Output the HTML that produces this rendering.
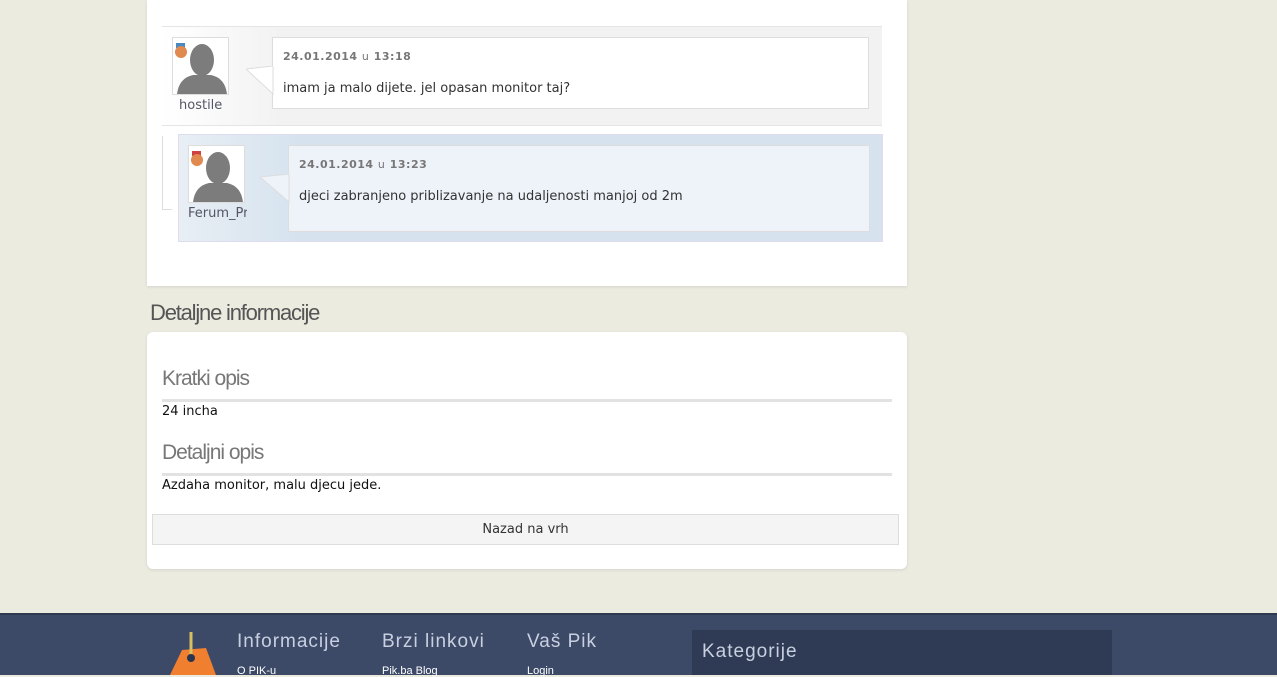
<!DOCTYPE html><html><head><meta charset="utf-8"><style>
*{margin:0;padding:0;box-sizing:border-box}
body{width:1277px;height:675px;overflow:hidden;background:#ebebe0;font-family:"DejaVu Sans",sans-serif;font-size:13px;color:#333;position:relative}
.abs{position:absolute}
.card{background:#fff;box-shadow:0 1px 3px rgba(0,0,0,.1)}
.av{position:absolute;width:57px;height:58px;background:#fff;border:1px solid #ddd;overflow:hidden}
.bub{position:absolute;border:1px solid #ddd}
.date{font-size:11px;font-weight:bold;color:#777;letter-spacing:.5px}
.date span{font-weight:normal}
h3{font-family:"Liberation Sans",sans-serif;font-weight:normal;font-size:21px;color:#777;letter-spacing:-1px}
.rule{height:3px;background:#e2e2e2}
.fh{position:absolute;font-family:'Liberation Sans',sans-serif;font-size:19px;color:#c8d0e0;letter-spacing:1px}
.fl{position:absolute;font-family:'Liberation Sans',sans-serif;font-size:11px;color:#fff;top:665px}
</style></head><body>
<div class="abs card" style="left:147px;top:0;width:760px;height:286px"></div>
<div class="abs" style="left:162px;top:26px;width:720px;height:100px;background:linear-gradient(90deg,#fff 0,#f2f2f2 120px);border-top:1px solid #e5e5e5;border-bottom:1px solid #e5e5e5"></div>
<div class="av" style="left:172px;top:37px"><svg width="57" height="58"><ellipse cx="29" cy="22" rx="12" ry="16" fill="#7c7c7c"/><path d="M4 56 Q6 40 20 37 L38 37 Q52 40 54 56Z" fill="#7c7c7c"/><rect x="3" y="5" width="9" height="5" fill="#4a88c0"/><circle cx="8" cy="14" r="6" fill="#e08a50"/></svg></div>
<div class="abs" style="left:179px;top:98px;color:#556">hostile</div>
<div class="bub" style="left:272px;top:37px;width:597px;height:72px;background:#fff"></div>
<svg class="abs" style="left:246px;top:66px" width="28" height="30"><path d="M27 0 L0 3 L27 28Z" fill="#fff" stroke="#ddd"/></svg>
<div class="abs date" style="left:283px;top:50px">24.01.2014 <span>u</span> 13:18</div>
<div class="abs" style="left:283px;top:81px">imam ja malo dijete. jel opasan monitor taj?</div>
<div class="abs" style="left:162px;top:136px;width:10px;height:74px;border-left:1px solid #ddd;border-bottom:1px solid #ddd"></div>
<div class="abs" style="left:178px;top:134px;width:705px;height:108px;background:linear-gradient(90deg,#e8eef4 0,#d6e3ef 120px);border:1px solid #dde"></div>
<div class="av" style="left:188px;top:145px"><svg width="57" height="58"><ellipse cx="29" cy="22" rx="12" ry="16" fill="#7c7c7c"/><path d="M4 56 Q6 40 20 37 L38 37 Q52 40 54 56Z" fill="#7c7c7c"/><rect x="3" y="5" width="9" height="5" fill="#d04040"/><circle cx="8" cy="14" r="6" fill="#e08a50"/></svg></div>
<div class="abs" style="left:188px;top:206px;color:#556;width:59px;overflow:hidden;white-space:nowrap">Ferum_Pr</div>
<div class="bub" style="left:288px;top:145px;width:582px;height:87px;background:#eef3fa"></div>
<svg class="abs" style="left:260px;top:174px" width="30" height="30"><path d="M29 0 L0 3 L29 28Z" fill="#eef3fa" stroke="#ddd"/></svg>
<div class="abs date" style="left:299px;top:158px">24.01.2014 <span>u</span> 13:23</div>
<div class="abs" style="left:299px;top:189px">djeci zabranjeno priblizavanje na udaljenosti manjoj od 2m</div>
<div class="abs" style="left:150px;top:300px;font-family:'Liberation Sans',sans-serif;font-size:22px;color:#555;letter-spacing:-1.2px">Detaljne informacije</div>
<div class="abs card" style="left:147px;top:332px;width:760px;height:237px;border-radius:6px"></div>
<h3 class="abs" style="left:162px;top:367px">Kratki opis</h3>
<div class="abs rule" style="left:162px;top:399px;width:730px"></div>
<div class="abs" style="left:162px;top:404px;color:#111">24 incha</div>
<h3 class="abs" style="left:162px;top:441px">Detaljni opis</h3>
<div class="abs rule" style="left:162px;top:473px;width:730px"></div>
<div class="abs" style="left:162px;top:478px;color:#111">Azdaha monitor, malu djecu jede.</div>
<div class="abs" style="left:152px;top:514px;width:747px;height:31px;background:#f4f4f4;border:1px solid #ddd;text-align:center;line-height:30px">Nazad na vrh</div>
<div class="abs" style="left:0;top:613px;width:1277px;height:62px;background:#3c4a68;border-top:2px solid #2e3a52"></div>
<svg class="abs" style="left:160px;top:628px" width="60" height="47"><path d="M10 47 L22 22 L46 20 L56 47Z" fill="#f07f30"/><line x1="31" y1="4" x2="31" y2="28" stroke="#d8c060" stroke-width="3"/><circle cx="31" cy="30" r="4" fill="#2a3550"/></svg>
<div class="fh" style="left:237px;top:631px">Informacije</div>
<div class="fh" style="left:382px;top:631px">Brzi linkovi</div>
<div class="fh" style="left:527px;top:631px">Vaš Pik</div>
<div class="fl" style="left:237px">O PIK-u</div>
<div class="fl" style="left:382px">Pik.ba Blog</div>
<div class="fl" style="left:527px">Login</div>
<div class="abs" style="left:692px;top:630px;width:420px;height:45px;background:#2f3b54"></div>
<div class="fh" style="left:702px;top:641px">Kategorije</div>
</body></html>
